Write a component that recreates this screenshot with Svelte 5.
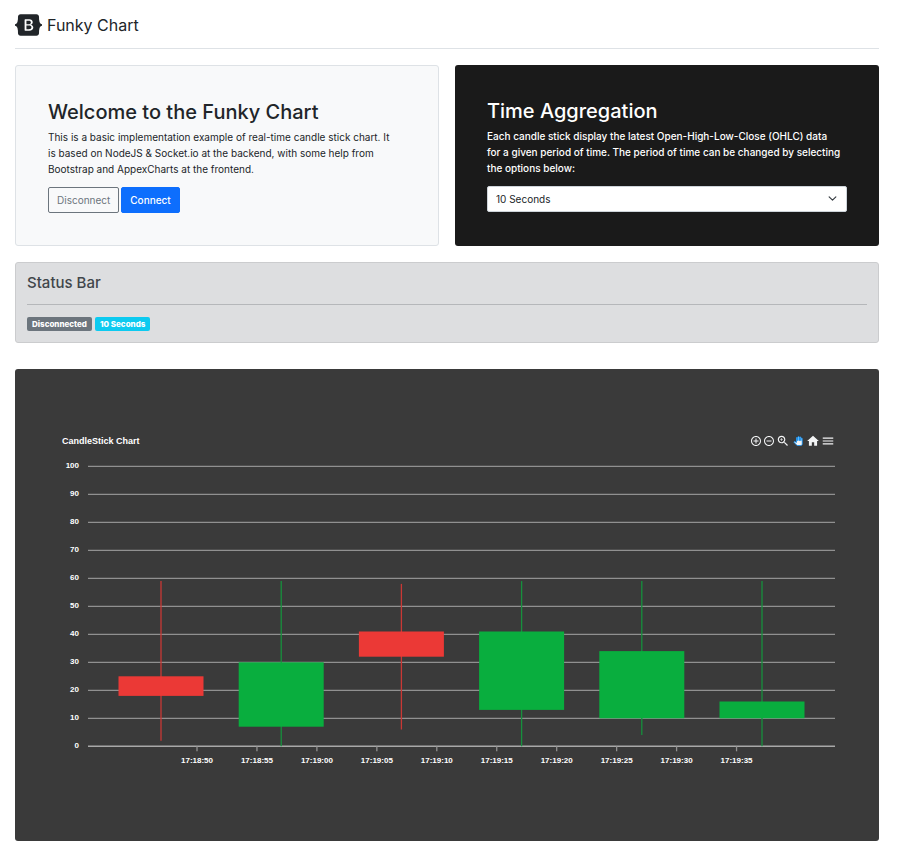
<script>
  let connected = $state(false);
  let period = $state('10 Seconds');
  const periods = ['5 Seconds', '10 Seconds', '30 Seconds', '1 Minute'];

  // Plot geometry in SVG user units
  const left = 26;
  const right = 773;
  const base = 288.3;
  const unit = 2.8;
  const y = (value) => base - value * unit;

  const levels = [0, 10, 20, 30, 40, 50, 60, 70, 80, 90, 100];
  const times = [
    '17:18:50', '17:18:55', '17:19:00', '17:19:05', '17:19:10',
    '17:19:15', '17:19:20', '17:19:25', '17:19:30', '17:19:35'
  ];
  const candles = [
    { open: 25, high: 59, low: 2, close: 18 },
    { open: 7, high: 59, low: 0, close: 30 },
    { open: 41, high: 58, low: 6, close: 32 },
    { open: 13, high: 59, low: 0, close: 41 },
    { open: 10, high: 59, low: 4, close: 34 },
    { open: 10, high: 59, low: 0, close: 16 }
  ].map((c, i) => ({
    ...c,
    x: 99 + i * 120.2,
    top: Math.max(c.open, c.close),
    bottom: Math.min(c.open, c.close),
    rising: c.close > c.open
  }));
</script>

<div class="container">
  <header>
    <a href="/" class="brand">
      <svg class="logo" viewBox="0 0 118 94" aria-hidden="true">
        <path fill="currentColor" fill-rule="evenodd" d="M24.509 0c-6.733 0-11.715 5.893-11.492 12.284.214 6.14-.064 14.092-2.066 20.577C8.943 39.365 5.547 43.485 0 44.014v5.972c5.547.529 8.943 4.649 10.951 11.153 2.002 6.485 2.28 14.437 2.066 20.577C12.794 88.106 17.776 94 24.51 94H93.5c6.733 0 11.714-5.893 11.491-12.284-.214-6.14.064-14.092 2.066-20.577 2.009-6.504 5.396-10.624 10.943-11.153v-5.972c-5.547-.529-8.934-4.649-10.943-11.153-2.002-6.484-2.28-14.437-2.066-20.577C105.214 5.894 100.233 0 93.5 0H24.508zM80 57.863C80 66.663 73.436 72 62.543 72H44a2 2 0 01-2-2V24a2 2 0 012-2h18.437c9.083 0 15.044 4.92 15.044 12.474 0 5.302-4.01 10.049-9.119 10.88v.277C75.317 46.394 80 51.21 80 57.863zM60.521 28.34H49.948v14.934h8.905c6.884 0 10.68-2.772 10.68-7.727 0-4.643-3.264-7.207-9.012-7.207zM49.948 49.2v16.458H60.91c7.167 0 10.964-2.876 10.964-8.281 0-5.406-3.903-8.178-11.425-8.178H49.948z" />
      </svg>
      <span>Funky Chart</span>
    </a>
  </header>

  <main>
    <div class="panels">
      <section class="panel light">
        <h2>Welcome to the Funky Chart</h2>
        <p>This is a basic implementation example of real-time candle stick chart. It<br /> is based on NodeJS &amp; Socket.io at the backend, with some help from<br /> Bootstrap and AppexCharts at the frontend.</p>
        <div class="actions">
          <button class="btn outline" type="button" onclick={() => (connected = false)}>Disconnect</button>
          <button class="btn primary" type="button" onclick={() => (connected = true)}>Connect</button>
        </div>
      </section>
      <section class="panel dark">
        <h2>Time Aggregation</h2>
        <p><label for="period">Each candle stick display the latest Open-High-Low-Close (OHLC) data<br /> for a given period of time. The period of time can be changed by selecting<br /> the options below:</label></p>
        <div class="picker">
          <select id="period" bind:value={period}>
            {#each periods as p}
              <option value={p}>{p}</option>
            {/each}
          </select>
          <svg class="chevron" viewBox="0 0 16 16" aria-hidden="true"><path d="M2 5l6 6 6-6" /></svg>
        </div>
      </section>
    </div>

    <section class="status">
      <h4>Status Bar</h4>
      <hr />
      <div class="badges">
        <span class="badge gray">{connected ? 'Connected' : 'Disconnected'}</span>
        <span class="badge cyan">{period}</span>
      </div>
    </section>

    <section class="chart">
      <div class="chart-head">
        <h3>CandleStick Chart</h3>
        <div class="toolbar">
          <button type="button" aria-label="Zoom in"><svg viewBox="0 0 24 24"><path d="M13 7h-2v4H7v2h4v4h2v-4h4v-2h-4V7zm-1-5C6.48 2 2 6.48 2 12s4.48 10 10 10 10-4.48 10-10S17.52 2 12 2zm0 18c-4.41 0-8-3.59-8-8s3.59-8 8-8 8 3.59 8 8-3.59 8-8 8z" /></svg></button>
          <button type="button" aria-label="Zoom out"><svg viewBox="0 0 24 24"><path d="M7 11v2h10v-2H7zm5-9C6.48 2 2 6.48 2 12s4.48 10 10 10 10-4.48 10-10S17.52 2 12 2zm0 18c-4.41 0-8-3.59-8-8s3.59-8 8-8 8 3.59 8 8-3.59 8-8 8z" /></svg></button>
          <button type="button" class="wide" aria-label="Selection zoom"><svg viewBox="0 0 24 24"><path d="M15.5 14h-.79l-.28-.27C15.41 12.59 16 11.11 16 9.5 16 5.91 13.09 3 9.5 3S3 5.91 3 9.5 5.91 16 9.5 16c1.61 0 3.09-.59 4.23-1.57l.27.28v.79l5 4.99L20.49 19l-4.99-5zm-6 0C7.01 14 5 11.99 5 9.5S7.01 5 9.5 5 14 7.01 14 9.5 11.99 14 9.5 14z" /><path d="M12 10h-2v2H9v-2H7V9h2V7h1v2h2v1z" /></svg></button>
          <button type="button" class="wide pan" aria-label="Panning"><svg viewBox="-1 -1 26 26"><path d="M23 5.5V20c0 2.2-1.8 4-4 4h-7.3c-1.08 0-2.1-.43-2.85-1.19L1 14.83s1.26-1.23 1.3-1.25c.22-.19.49-.29.79-.29.22 0 .42.06.6.16.04.01 4.31 2.46 4.31 2.46V4c0-.83.67-1.5 1.5-1.5S11 3.17 11 4v7h1V1.5c0-.83.67-1.5 1.5-1.5S15 .67 15 1.5V11h1V2.5c0-.83.67-1.5 1.5-1.5s1.5.67 1.5 1.5V11h1V5.5c0-.83.67-1.5 1.5-1.5s1.5.67 1.5 1.5z" /></svg></button>
          <button type="button" class="wide" aria-label="Reset zoom"><svg viewBox="0 0 24 24"><path d="M10 20v-6h4v6h5v-8h3L12 3 2 12h3v8z" /></svg></button>
          <button type="button" class="wide" aria-label="Menu"><svg viewBox="0 0 24 24"><path d="M3 18h18v-2H3v2zm0-5h18v-2H3v2zm0-7v2h18V6H3z" /></svg></button>
        </div>
      </div>

      <svg class="plot" viewBox="0 0 773 312" role="img" aria-label="Candlestick chart">
        {#each levels as level}
          <line class:axis={level === 0} class="grid" x1={left} x2={right} y1={y(level)} y2={y(level)} />
          <text x="17" y={y(level) + 2} text-anchor="end">{level}</text>
        {/each}
        {#each times as time, i}
          <line class="tick" x1={135 + i * 59.95} x2={135 + i * 59.95} y1={base} y2={base + 5} />
          <text x={135 + i * 59.95} y={base + 17} text-anchor="middle">{time}</text>
        {/each}
        {#each candles as c}
          <g class={c.rising ? 'rise' : 'fall'}>
            <line x1={c.x} x2={c.x} y1={y(c.high)} y2={y(c.low)} />
            <rect x={c.x - 42.5} width="85" y={y(c.top)} height={(c.top - c.bottom) * unit} />
          </g>
        {/each}
      </svg>
    </section>
  </main>
</div>

<style>
  :global(body) {
    margin: 0;
    background: #fff;
  }
  .container {
    box-sizing: border-box;
    padding: 0 19px 8px 15px;
    font: 400 10px/16px Inter, "Liberation Sans", sans-serif;
    color: #212529;
  }
  .container :is(h2, h3, h4, p) {
    margin: 0;
  }
  header {
    display: flex;
    height: 48px;
    margin-bottom: 16px;
    border-bottom: 1px solid #dee2e6;
  }
  .brand {
    display: flex;
    align-items: center;
    gap: 5px;
    padding-top: 2px;
    font-size: 16px;
    line-height: 24px;
    color: inherit;
    text-decoration: none;
  }
  .logo {
    width: 27px;
    height: 22px;
  }
  .panels {
    display: grid;
    grid-template-columns: 1fr 1fr;
    gap: 16px;
  }
  .panel {
    box-sizing: border-box;
    padding: 32px;
    border-radius: 3px;
  }
  .light {
    background: #f8f9fa;
    border: 1px solid #dee2e6;
  }
  .dark {
    background: #1a1a1a;
    color: #fff;
    font-weight: 500;
  }
  h2 {
    font-size: 20px;
    line-height: 28px;
    font-weight: 500;
  }
  .panel h2 {
    margin-bottom: 3px;
  }
  .panel p {
    margin-bottom: 10px;
  }
  .actions {
    display: flex;
    gap: 2px;
  }
  .btn {
    height: 26px;
    padding: 0 8px;
    border: 1px solid;
    border-radius: 2px;
    font: inherit;
    cursor: pointer;
  }
  .outline {
    background: transparent;
    border-color: #6c757d;
    color: #6c757d;
  }
  .primary {
    background: #0d6efd;
    border-color: #0d6efd;
    color: #fff;
    font-weight: 500;
  }
  .picker {
    position: relative;
  }
  select {
    appearance: none;
    display: block;
    width: 100%;
    height: 26px;
    padding: 0 24px 0 8px;
    background: #fff;
    border: 1px solid #ced4da;
    border-radius: 2px;
    font: inherit;
    font-weight: 400;
    color: #212529;
  }
  .chevron {
    position: absolute;
    right: 10px;
    top: 8px;
    width: 9px;
    height: 9px;
    fill: none;
    stroke: #343a40;
    stroke-width: 2;
    stroke-linecap: round;
    stroke-linejoin: round;
    pointer-events: none;
  }
  .status {
    margin-top: 16px;
    padding: 11px;
    background: #dddee0;
    border: 1px solid #cbccce;
    border-radius: 3px;
  }
  .status h4 {
    font-size: 15px;
    line-height: 18px;
    font-weight: 500;
    color: #41464b;
  }
  .status hr {
    margin: 12px 0;
    border: 0;
    border-top: 1px solid #b5b7ba;
  }
  .badges {
    display: flex;
    gap: 3px;
  }
  .badge {
    padding: 0 5px;
    border-radius: 2px;
    font-size: 8px;
    line-height: 14px;
    font-weight: 800;
    color: #fff;
  }
  .gray {
    background: #6c757d;
  }
  .cyan {
    background: #0dcaf0;
  }
  .chart {
    margin-top: 26px;
    padding: 64px 44px 71px 47px;
    background: #3a3a3a;
    border-radius: 3px;
    color: #fff;
  }
  .chart-head {
    display: flex;
    justify-content: space-between;
    height: 16px;
    margin-bottom: 9px;
  }
  h3 {
    font: 700 9px/16px "Liberation Sans", Arial, sans-serif;
  }
  .toolbar {
    display: flex;
    align-items: center;
  }
  .toolbar button {
    display: flex;
    align-items: center;
    justify-content: center;
    width: 13px;
    height: 16px;
    padding: 0;
    border: 0;
    background: none;
    cursor: pointer;
  }
  .toolbar .wide {
    width: 15px;
  }
  .toolbar svg {
    flex: none;
    width: 12px;
    height: 12px;
    fill: #f3f4f5;
  }
  .toolbar .wide svg {
    width: 14px;
    height: 14px;
  }
  .toolbar .pan svg {
    width: 10px;
    height: 10px;
    stroke: #008ffb;
    stroke-width: 2;
  }
  .plot {
    display: block;
    width: 100%;
    height: auto;
  }
  .plot text {
    font: 700 8px "Liberation Sans", Arial, sans-serif;
    fill: #fff;
  }
  .grid,
  .tick {
    stroke: #909090;
    stroke-width: 1.3;
  }
  .axis {
    stroke: #a8a8a8;
    stroke-width: 1.6;
  }
  .rise line {
    stroke: #16903d;
    stroke-width: 1.3;
  }
  .fall line {
    stroke: #c93835;
    stroke-width: 1.3;
  }
  .rise rect {
    fill: #09ae3e;
  }
  .fall rect {
    fill: #eb3936;
  }
</style>
